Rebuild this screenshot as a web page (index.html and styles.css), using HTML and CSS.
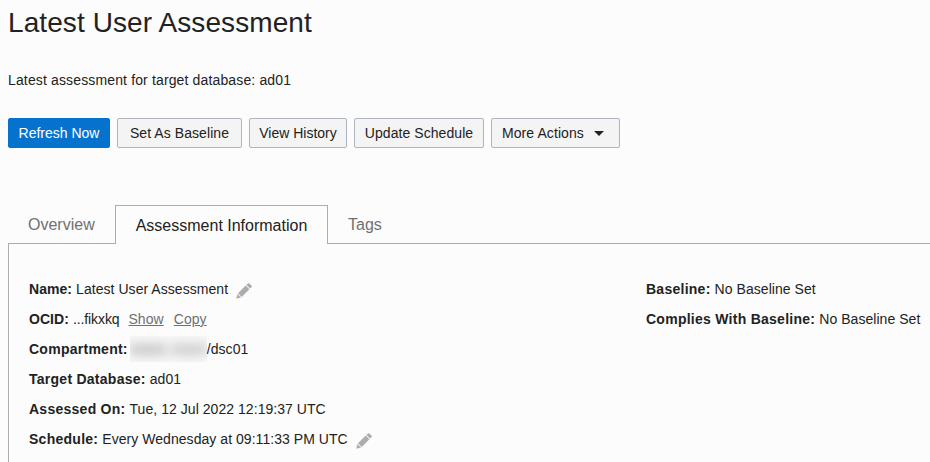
FILE: index.html
```html
<!DOCTYPE html>
<html lang="en">
<head>
<meta charset="utf-8">
<title>Latest User Assessment</title>
<link rel="stylesheet" href="styles.css">
</head>
<body>
<h1 class="title">Latest User Assessment</h1>
<p class="subtitle">Latest assessment for target database: ad01</p>
<div class="actions">
  <button class="btn primary b1">Refresh Now</button>
  <button class="btn b2">Set As Baseline</button>
  <button class="btn b3">View History</button>
  <button class="btn b4">Update Schedule</button>
  <button class="btn b5">More Actions<svg class="caret" viewBox="0 0 10 5"><path d="M0 0h10L5 5z"/></svg></button>
</div>
<nav class="tabs">
  <a class="tab overview">Overview</a>
  <a class="tab active">Assessment Information</a>
  <a class="tab tags">Tags</a>
</nav>
<main class="panel">
  <div class="column left">
    <div class="row"><b class="snug">Name:</b><span>Latest User Assessment</span><svg class="pencil" viewBox="0 0 16 16"><path d="M0.3 15.7L1.4 10.9L5.1 14.6ZM2 10.3L9.7 2.6L13.4 6.3L5.7 14ZM10.4 1.9L12 .4Q12.7 -.1 13.4 .5L15.5 2.6Q16.1 3.3 15.6 4L14.1 5.6Z"/></svg></div>
    <div class="row"><b class="snug">OCID:</b><span class="ocid">...fikxkq</span><a class="link show">Show</a><a class="link">Copy</a></div>
    <div class="row"><b>Compartment:</b><span class="redacted"><i class="smudge"></i><i class="smudge second"></i></span><span class="path">/dsc01</span></div>
    <div class="row"><b>Target Database:</b><span>ad01</span></div>
    <div class="row"><b>Assessed On:</b><span>Tue, 12 Jul 2022 12:19:37 UTC</span></div>
    <div class="row"><b>Schedule:</b><span>Every Wednesday at 09:11:33 PM UTC</span><svg class="pencil" viewBox="0 0 16 16"><path d="M0.3 15.7L1.4 10.9L5.1 14.6ZM2 10.3L9.7 2.6L13.4 6.3L5.7 14ZM10.4 1.9L12 .4Q12.7 -.1 13.4 .5L15.5 2.6Q16.1 3.3 15.6 4L14.1 5.6Z"/></svg></div>
  </div>
  <div class="column">
    <div class="row"><b>Baseline:</b><span>No Baseline Set</span></div>
    <div class="row"><b>Complies With Baseline:</b><span>No Baseline Set</span></div>
  </div>
</main>
</body>
</html>
```
FILE: styles.css
```css
* { box-sizing: border-box; }
body {
  margin: 0;
  padding: 0 0 0 8px;
  height: 462px;
  overflow: hidden;
  background: #fcfcfc;
  color: #222;
  font: 14px/30px "Liberation Sans", Arial, sans-serif;
  display: flex;
  flex-direction: column;
}
.title { margin: 6px 0 0; font-size: 28px; font-weight: 400; line-height: 34px; letter-spacing: .09px; }
.subtitle { margin: 25px 0 0; letter-spacing: .14px; }
.actions { display: flex; gap: 7px; margin-top: 23px; }
.btn {
  height: 30px;
  padding: 0;
  border: 1px solid #aeb5c0;
  border-radius: 2px;
  background: #f4f4f4;
  color: #222;
  font: inherit;
  line-height: 28px;
  white-space: nowrap;
  display: flex;
  justify-content: center;
}
.primary { background: #0572ce; border-color: #0572ce; color: #fff; }
.b1 { width: 102px; }
.b2 { width: 125px; letter-spacing: .07px; }
.b3 { width: 98px; }
.b4 { width: 130px; letter-spacing: .07px; }
.b5 { width: 129px; justify-content: flex-start; padding-left: 10px; letter-spacing: .08px; }
.caret { width: 10px; height: 5px; margin: 12px 0 0 10px; fill: #222; }
.tabs { display: flex; height: 39px; margin-top: 57px; font-size: 16px; line-height: 40px; color: #707070; }
.tab { border-bottom: 1px solid #adadad; }
.overview { width: 107px; padding-left: 20px; }
.active { width: 213px; border: 1px solid #adadad; border-bottom: 0; color: #222; text-align: center; }
.tags { flex: 1; padding-left: 20px; }
.panel { flex: 1; display: flex; border-left: 1px solid #adadad; padding: 30px 0 0 20px; }
.left { width: 617px; }
.row { display: flex; height: 30px; gap: 4px; white-space: nowrap; letter-spacing: .05px; }
.row b { letter-spacing: .26px; }
.row .snug { letter-spacing: .05px; }
.row .ocid { letter-spacing: -.1px; }
.pencil { width: 16px; height: 16px; margin: 9px 0 0 4px; fill: #adadad; }
.link { color: #707070; text-decoration: underline; }
.show { margin: 0 6px 0 5px; }
.redacted { width: 77px; height: 26px; margin: 2px 0 0 -2px; overflow: hidden; display: flex; align-items: center; gap: 5px; background: #f8f8f8; }
.smudge { width: 36px; height: 9px; background: #bbb; filter: blur(6px); }
.second { background: #c2c2c2; }
.path { margin-left: -4px; }
```
